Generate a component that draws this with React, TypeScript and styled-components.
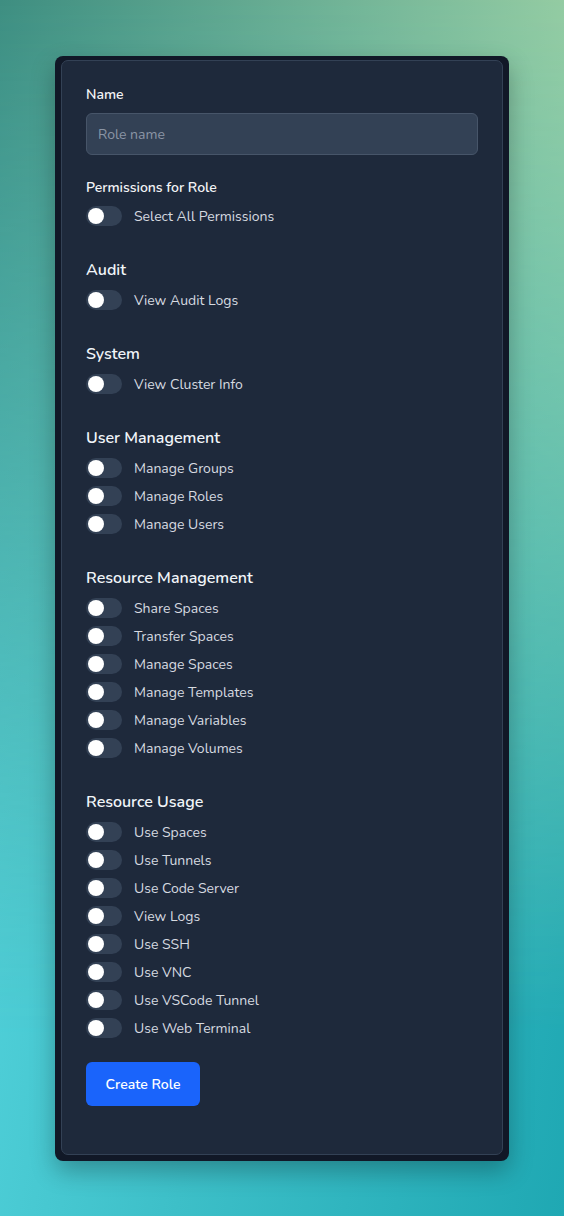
import styled, { createGlobalStyle } from "styled-components";

const GlobalStyle = createGlobalStyle`
  html, body {
    margin: 0;
    padding: 0;
  }

  body {
    min-height: 1216px;
    font-family: "Nunito", Lato, "Noto Sans", sans-serif;
    background: linear-gradient(100deg, #5bdae3 0%, #3dbfc8 50%, #1fa8b3 100%);
  }
`;

const Page = styled.div`
  position: relative;
  min-height: 1216px;
  box-sizing: border-box;
  padding-top: 56px;
  display: flex;
  justify-content: center;
  align-items: flex-start;

  &::before {
    content: "";
    position: absolute;
    inset: 0;
    background: linear-gradient(96deg, #3e8e81 0%, #72b497 50%, #a8d9a9 100%);
    -webkit-mask-image: linear-gradient(to bottom, #000 0%, rgba(0, 0, 0, 0.6) 35%, transparent 85%);
    mask-image: linear-gradient(to bottom, #000 0%, rgba(0, 0, 0, 0.6) 35%, transparent 85%);
  }
`;

const Frame = styled.div`
  position: relative;
  width: 454px;
  box-sizing: border-box;
  padding: 4px 6px 6px 6px;
  background: #111827;
  border-radius: 8px;
  box-shadow: 0 10px 24px rgba(0, 0, 0, 0.28);
`;

const Card = styled.form`
  background: #1e293b;
  border: 1px solid #334155;
  border-radius: 7px;
  padding: 24px 24px 48px 24px;
  display: flex;
  flex-direction: column;
  align-items: flex-start;
`;

const FieldLabel = styled.label`
  display: block;
  font-size: 14px;
  line-height: 20px;
  font-weight: 600;
  color: #f3f4f6;
`;

const TextInput = styled.input`
  box-sizing: border-box;
  width: 100%;
  height: 42px;
  margin-top: 8px;
  padding: 0 11px;
  background: #334155;
  border: 1px solid #475569;
  border-radius: 6px;
  font-family: inherit;
  font-size: 14px;
  color: #e5e7eb;
  outline: none;

  &::placeholder {
    color: #8b95a5;
  }
`;

const Group = styled.div<{ $gap: number }>`
  width: 100%;
  margin-top: ${(p) => p.$gap}px;
`;

const SectionTitle = styled.h3`
  margin: 0;
  font-size: 16px;
  line-height: 24px;
  font-weight: 600;
  color: #f1f5f9;
`;

const ToggleList = styled.div`
  margin-top: 8px;
  display: flex;
  flex-direction: column;
  gap: 8px;
`;

const ToggleRow = styled.label`
  display: flex;
  align-items: center;
  gap: 12px;
  height: 20px;
  font-size: 14px;
  color: #d6dae0;
  cursor: pointer;
`;

const Track = styled.span<{ $on: boolean }>`
  position: relative;
  flex: none;
  width: 36px;
  height: 20px;
  border-radius: 10px;
  background: ${(p) => (p.$on ? "#1a66ff" : "#334155")};

  &::after {
    content: "";
    position: absolute;
    top: 2px;
    left: ${(p) => (p.$on ? "18px" : "2px")};
    width: 16px;
    height: 16px;
    border-radius: 50%;
    background: #ffffff;
  }
`;

const SubmitButton = styled.button`
  margin-top: 24px;
  width: 114px;
  height: 44px;
  border: none;
  border-radius: 6px;
  background: #1a64fb;
  color: #ffffff;
  font-family: inherit;
  font-size: 14px;
  font-weight: 600;
  cursor: pointer;
`;

const sections: { title: string; items: string[] }[] = [
  { title: "Audit", items: ["View Audit Logs"] },
  { title: "System", items: ["View Cluster Info"] },
  {
    title: "User Management",
    items: ["Manage Groups", "Manage Roles", "Manage Users"],
  },
  {
    title: "Resource Management",
    items: [
      "Share Spaces",
      "Transfer Spaces",
      "Manage Spaces",
      "Manage Templates",
      "Manage Variables",
      "Manage Volumes",
    ],
  },
  {
    title: "Resource Usage",
    items: [
      "Use Spaces",
      "Use Tunnels",
      "Use Code Server",
      "View Logs",
      "Use SSH",
      "Use VNC",
      "Use VSCode Tunnel",
      "Use Web Terminal",
    ],
  },
];

function Toggle({ label }: { label: string }) {
  return (
    <ToggleRow>
      <Track $on={false} />
      {label}
    </ToggleRow>
  );
}

export default function App() {
  return (
    <>
      <GlobalStyle />
      <Page>
        <Frame>
          <Card onSubmit={(e) => e.preventDefault()}>
            <Group $gap={0}>
              <FieldLabel htmlFor="role-name">Name</FieldLabel>
              <TextInput id="role-name" placeholder="Role name" />
            </Group>

            <Group $gap={23}>
              <FieldLabel>Permissions for Role</FieldLabel>
              <ToggleList>
                <Toggle label="Select All Permissions" />
              </ToggleList>
            </Group>

            {sections.map((section) => (
              <Group $gap={32} key={section.title}>
                <SectionTitle>{section.title}</SectionTitle>
                <ToggleList>
                  {section.items.map((item) => (
                    <Toggle key={item} label={item} />
                  ))}
                </ToggleList>
              </Group>
            ))}

            <SubmitButton type="submit">Create Role</SubmitButton>
          </Card>
        </Frame>
      </Page>
    </>
  );
}
